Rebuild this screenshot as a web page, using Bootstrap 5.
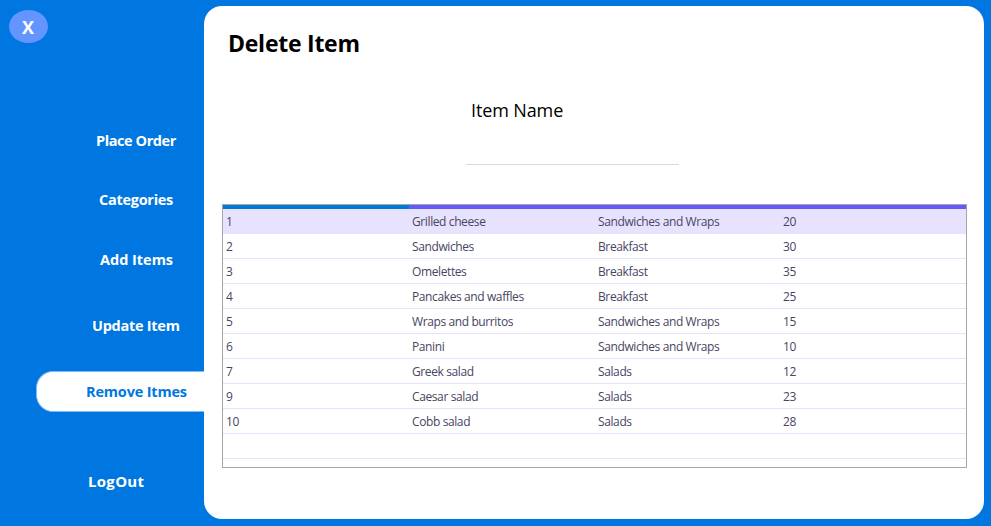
<!DOCTYPE html>
<html lang="en">
<head>
<meta charset="utf-8">
<meta name="viewport" content="width=device-width, initial-scale=1">
<title>Delete Item</title>
<link href="https://cdn.jsdelivr.net/npm/bootstrap@5.3.0/dist/css/bootstrap.min.css" rel="stylesheet">
<style>
body { background: #0077e0; font-family: "Open Sans", "Noto Sans", sans-serif; height: 526px; overflow: hidden; }
.side { width: 204px; height: 526px; font-size: 14.5px; font-weight: 700; line-height: 20px; color: #fff; }
.side a { color: inherit; text-decoration: none; white-space: nowrap; }
.close-btn { width: 39px; height: 33px; margin: 10px 0 0 8.5px; border-radius: 50%; background: #6495ff; color: #fff; font-size: 18px; line-height: 34px; font-weight: 700; }
.l1 { margin: 88px 0 0 96px; letter-spacing: -.42px; }
.l2 { margin: 39px 0 0 99px; letter-spacing: -.28px; }
.l3 { margin: 40px 0 0 100px; letter-spacing: -.02px; }
.l4 { margin: 46px 0 0 92px; letter-spacing: -.27px; }
.l5 { margin: 35px 0 0 36px; height: 41px; padding-left: 49px; border: solid #7fbbf0; border-width: 1px 0 1px 1px; border-radius: 17px 0 0 17px; background: #fff; letter-spacing: -.18px; }
.side .l5 { color: #0077e0; }
.l6 { margin: 59px 0 0 88px; font-size: 15px; letter-spacing: .3px; }
.panel { width: 780px; height: 513px; margin-top: 6px; border-radius: 18px; background: #fff; color: #000; }
.panel h1 { font-size: 23px; line-height: 30px; font-weight: 700; letter-spacing: -.25px; margin: 22px 0 0 24px; }
.name-label { font-size: 18px; line-height: 24px; margin: 40px 0 0 267px; letter-spacing: -.12px; }
.name-input { width: 213px; height: 43px; margin-left: 262px; border: 0; border-bottom: 1px solid #d9d9d9; outline: 0; padding: 0; }
.grid { width: 745px; height: 264px; margin: 39px 0 0 18px; border: 1px solid #a5a5ab; overflow: hidden; }
.items { width: 743px; table-layout: fixed; border-collapse: separate; border-spacing: 0; font-size: 12px; color: #47455f; }
.items th { height: 4px; padding: 0; background: #6459fa; }
.items th:first-child { background: #0078d7; }
.items td { height: 25px; padding: 2px 0 0 3px; line-height: 22px; border-bottom: 1px solid #e7e3ff; letter-spacing: -.39px; white-space: nowrap; }
.items .picked td { background: #e7e3ff; }
</style>
</head>
<body class="d-flex">
<nav class="side d-flex flex-column align-items-start flex-shrink-0">
  <button class="close-btn border-0 p-0 text-center" type="button">X</button>
  <a class="l1" href="#">Place Order</a>
  <a class="l2" href="#">Categories</a>
  <a class="l3" href="#">Add Items</a>
  <a class="l4" href="#">Update Item</a>
  <a class="l5 d-flex align-items-center align-self-stretch" href="#">Remove Itmes</a>
  <a class="l6" href="#">LogOut</a>
</nav>
<main class="panel d-flex flex-column align-items-start flex-shrink-0">
  <h1>Delete Item</h1>
  <label class="name-label" for="itemName">Item Name</label>
  <input class="name-input" id="itemName" type="text">
  <div class="grid">
    <table class="items">
      <colgroup><col style="width:186px"><col style="width:186px"><col style="width:185px"><col style="width:186px"></colgroup>
      <thead><tr><th></th><th></th><th></th><th></th></tr></thead>
      <tbody>
        <tr class="picked"><td>1</td><td>Grilled cheese</td><td>Sandwiches and Wraps</td><td>20</td></tr>
        <tr><td>2</td><td>Sandwiches</td><td>Breakfast</td><td>30</td></tr>
        <tr><td>3</td><td>Omelettes</td><td>Breakfast</td><td>35</td></tr>
        <tr><td>4</td><td>Pancakes and waffles</td><td>Breakfast</td><td>25</td></tr>
        <tr><td>5</td><td>Wraps and burritos</td><td>Sandwiches and Wraps</td><td>15</td></tr>
        <tr><td>6</td><td>Panini</td><td>Sandwiches and Wraps</td><td>10</td></tr>
        <tr><td>7</td><td>Greek salad</td><td>Salads</td><td>12</td></tr>
        <tr><td>9</td><td>Caesar salad</td><td>Salads</td><td>23</td></tr>
        <tr><td>10</td><td>Cobb salad</td><td>Salads</td><td>28</td></tr>
        <tr><td></td><td></td><td></td><td></td></tr>
      </tbody>
    </table>
  </div>
</main>
<script src="https://cdn.jsdelivr.net/npm/bootstrap@5.3.0/dist/js/bootstrap.bundle.min.js"></script>
</body>
</html>
